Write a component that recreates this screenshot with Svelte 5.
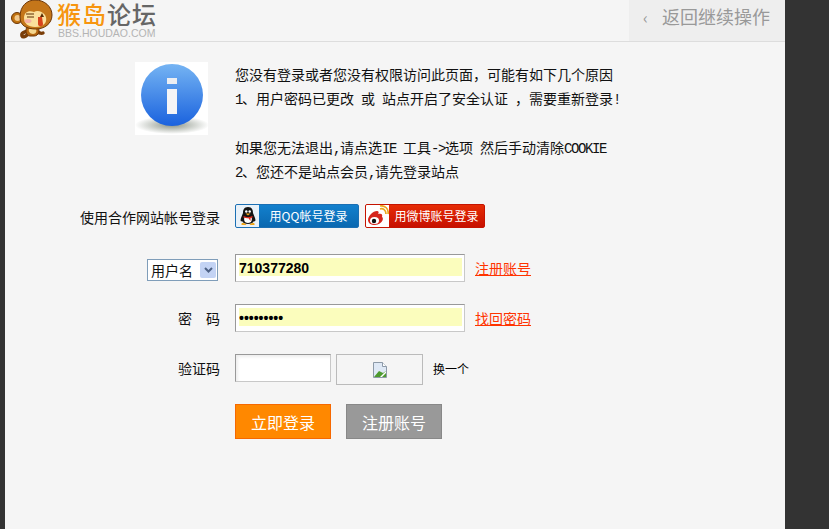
<script>
  // Login form state
  let account = '710377280';
  let password = '*********';
  let captcha = '';

  const notice = [
    '您没有登录或者您没有权限访问此页面，可能有如下几个原因',
    '1、用户密码已更改 或 站点开启了安全认证 ，需要重新登录!',
    '',
    '如果您无法退出,请点选IE 工具->选项 然后手动清除COOKIE',
    '2、您还不是站点会员,请先登录站点'
  ];

  // Latin runs are half a CJK cell wide, so they get their own font
  const chunks = (line) => line.split(/([\x20-\x7e]+)/).filter(Boolean);
  const isLatin = (part) => /^[\x20-\x7e]/.test(part);
</script>

<div class="page">
  <header class="top">
    <div class="brand">
      <svg class="monkey" width="42" height="40" viewBox="0 0 42 40">
        <path d="M17 31c-4 1-7 2-6 5 1 2 4 0 5-1M25 31c3 2 5 3 7 2" fill="none" stroke="#7a3d08" stroke-width="3.4" stroke-linecap="round"/>
        <path d="M16 27h11c2 3 1 9-4 9h-4c-4 0-5-6-3-9z" fill="#b4650f" stroke="#6d3606"/>
        <path d="M18 29h7c1 2 0 5-3 5s-5-3-4-5z" fill="#f6d78f"/>
        <circle cx="6" cy="18" r="5.500" fill="#c0720f" stroke="#6d3606"/>
        <circle cx="6.500" cy="18" r="3" fill="#f3c98b"/>
        <path d="M9 17C9 6 16 0 24 0c10 0 17 7 17 15 0 9-8 14-16 14C16 29 9 26 9 17z" fill="#c4761a" stroke="#6d3606"/>
        <path d="M13 18c0-5 4-8 10-6 3-2 8-1 11 3 3 5 1 12-10 12-7 0-11-4-11-9z" fill="#fbe09c"/>
        <path d="M15 14h8M16 17h7" stroke="#5a2c05" stroke-width="1.200"/>
        <path d="M31 13l-2 4 4 0z" fill="#5a2c05"/>
        <ellipse cx="17" cy="21" rx="3.500" ry="2" fill="#f7b2a5"/>
        <path d="M27 17l4 0 1 7c0 3-5 3-5 0z" fill="#d8431c"/>
      </svg>
      <div class="brand-text">
        <div class="brand-name"><span class="orange">猴岛</span>论坛</div>
        <div class="brand-url">BBS.HOUDAO.COM</div>
      </div>
    </div>
    <a class="back" href="#back"><span class="arrow">‹</span>返回继续操作</a>
  </header>

  <section class="notice">
    <div class="info-box">
      <svg width="73" height="73" viewBox="0 0 73 73">
        <defs>
          <linearGradient id="ball" x1="0" y1="0" x2="0" y2="1">
            <stop offset="0" stop-color="#75b4f3" />
            <stop offset="1" stop-color="#1a62de" />
          </linearGradient>
          <radialGradient id="shade">
            <stop offset="0" stop-color="#8b9488" />
            <stop offset="1" stop-color="#ffffff" />
          </radialGradient>
        </defs>
        <ellipse cx="37" cy="63" rx="37" ry="9" fill="url(#shade)" />
        <circle cx="37" cy="33" r="31" fill="url(#ball)" />
        <rect x="32" y="16" width="10" height="6" fill="#eceef2" />
        <rect x="32" y="27" width="10" height="25" fill="#f4f4f6" />
      </svg>
    </div>
    <div class="notice-text">
      {#each notice as line}
        <p>{#each chunks(line) as part}{#if isLatin(part)}<span class="latin">{part}</span>{:else}{part}{/if}{/each}&nbsp;</p>
      {/each}
    </div>
  </section>

  <form class="login" on:submit|preventDefault>
    <div class="row social">
      <div class="label">使用合作网站帐号登录</div>
      <div class="field">
        <a class="share qq" href="#qq">
          <span class="share-icon">
            <svg width="20" height="21" viewBox="0 0 20 21">
              <path d="M10 1C6 1 5 4 5 7l-2 5c-1 3 0 4 1 3 1 2 3 3 6 3s5-1 6-3c1 1 2 0 1-3l-2-5c0-3-1-6-5-6z" fill="#141414"/>
              <path d="M6.500 11c2 1 5 1 7 0 1 3 0 6-3.500 6s-4.500-3-3.500-6z" fill="#fff"/>
              <circle cx="8.300" cy="5.500" r="1.200" fill="#fff"/>
              <circle cx="11.700" cy="5.500" r="1.200" fill="#fff"/>
              <path d="M7.500 7.500h5L10 9.500z" fill="#f2a516"/>
              <path d="M5.500 10c3 1.500 6 1.500 9 0v1.500l-2 .8v2.700l-2-2.800c-2 0-3.500-.3-5-.8z" fill="#e3281b"/>
              <path d="M3.500 17.500c2-1 4 0 5 1.500h-5zM16.500 17.500c-2-1-4 0-5 1.500h5z" fill="#f2a516"/>
            </svg>
          </span>
          <span class="share-text">用QQ帐号登录</span>
        </a>
        <a class="share weibo" href="#weibo">
          <span class="share-icon">
            <svg width="22" height="22" viewBox="0 0 22 22">
              <path d="M1 15c0-4 5-9 9-9 2 0 2 2 1 3 3-1 5 0 4 3 2 1 1 7-7 8-4 0-7-2-7-5z" fill="#d6251c"/>
              <ellipse cx="7.500" cy="15.500" rx="4.500" ry="3.500" fill="#fff"/>
              <circle cx="7" cy="16" r="2.200" fill="#111"/>
              <path d="M13 4c3-1 6 1 6 5M13 1c5-1 9 3 8 8" fill="none" stroke="#eda81c" stroke-width="1.700"/>
            </svg>
          </span>
          <span class="share-text">用微博账号登录</span>
        </a>
      </div>
    </div>

    <div class="row">
      <div class="label">
        <div class="select">用户名<span class="select-btn">
            <svg width="9" height="6" viewBox="0 0 9 6"><path d="M1 1l3.500 3.500L8 1" fill="none" stroke="#4d6185" stroke-width="2"/></svg>
          </span></div>
      </div>
      <div class="field">
        <div class="input wide"><input class="filled" bind:value={account} /></div>
        <a class="link" href="#register">注册账号</a>
      </div>
    </div>

    <div class="row">
      <div class="label">密　码</div>
      <div class="field">
        <div class="input wide"><input class="filled" type="password" bind:value={password} /></div>
        <a class="link" href="#find">找回密码</a>
      </div>
    </div>

    <div class="row code">
      <div class="label">验证码</div>
      <div class="field">
        <div class="input short"><input bind:value={captcha} /></div>
        <div class="captcha">
          <svg width="16" height="16" viewBox="0 0 16 16">
            <path d="M1.500.5h9l4 4v11h-13z" fill="#dfe9f6" stroke="#8d9aa8"/>
            <path d="M10.500.5v4h4" fill="#fff" stroke="#8d9aa8"/>
            <path d="M2 15l5-6 4 2 3-2v6z" fill="#4d9a2e"/>
            <path d="M8 15l6-6v2l-4 4z" fill="#fff"/>
          </svg>
        </div>
        <a class="swap" href="#swap">换一个</a>
      </div>
    </div>

    <div class="row actions">
      <div class="label"></div>
      <div class="field">
        <button class="btn primary" type="submit">立即登录</button>
        <button class="btn secondary" type="button">注册账号</button>
      </div>
    </div>
  </form>
</div>

<style>
  :global(body) {
    margin: 0;
    background: #333;
  }

  .page {
    width: 780px;
    height: 529px;
    margin-left: 5px;
    background: #f5f5f5;
    overflow: hidden;
    font-family: "Noto Sans CJK SC", "Liberation Sans", sans-serif;
    font-size: 14px;
    color: #111;
  }

  .top {
    height: 41px;
    display: flex;
    justify-content: space-between;
    border-bottom: 1px solid #ddd;
  }

  .brand {
    display: flex;
    padding-left: 6px;
  }

  .monkey {
    margin-right: 4px;
  }

  .brand-name {
    font-size: 24px;
    line-height: 27px;
    font-weight: 500;
    color: #666;
    letter-spacing: 1px;
    white-space: nowrap;
  }

  .orange {
    color: #f7950f;
  }

  .brand-url {
    padding-left: 1px;
    font-family: "Liberation Sans", sans-serif;
    font-size: 10.500px;
    line-height: 13px;
    color: #b4b4b4;
    white-space: nowrap;
  }

  .back {
    width: 156px;
    box-sizing: border-box;
    padding-left: 14px;
    background: #eee;
    color: #999;
    font-size: 18px;
    line-height: 32px;
    text-decoration: none;
    white-space: nowrap;
  }

  .arrow {
    display: inline-block;
    width: 19px;
    font-size: 16px;
  }

  .notice {
    display: flex;
    margin: 20px 0 0 130px;
    gap: 27px;
  }

  .info-box {
    width: 73px;
    height: 73px;
    background: #fff;
  }

  .info-box svg {
    display: block;
  }

  .notice-text {
    font-size: 14px;
    line-height: 24.300px;
    white-space: pre;
  }

  .notice-text p {
    margin: 0;
  }

  .latin {
    font-family: "Liberation Mono", monospace;
    letter-spacing: -1.400px;
    line-height: 0;
  }

  .login {
    margin-top: 21px;
  }

  .row {
    display: flex;
    align-items: center;
    height: 28px;
    margin-bottom: 22px;
  }

  .row.social {
    height: 24px;
    margin-bottom: 26px;
  }

  .row.social .label {
    margin-top: 1px;
  }

  .row.actions {
    height: 35px;
  }

  .label {
    width: 215px;
    flex: none;
    display: flex;
    justify-content: flex-end;
    white-space: nowrap;
    margin-top: -1px;
  }

  .field {
    display: flex;
    align-items: center;
    margin-left: 15px;
  }

  .share {
    display: flex;
    height: 24px;
    box-sizing: border-box;
    margin-right: 6px;
    border-radius: 2px;
    overflow: hidden;
    color: #fff;
    font-size: 12px;
    line-height: 22px;
    text-decoration: none;
    border: 1px solid;
  }

  .share-icon {
    width: 23px;
    display: flex;
    align-items: center;
    justify-content: center;
    background: #fff;
    flex: none;
  }

  .share-text {
    text-align: center;
    white-space: nowrap;
  }

  .qq {
    width: 124px;
    border-color: #1b6fb3;
    background: linear-gradient(#1380cd, #0a68b0);
  }

  .qq .share-icon {
    background: #e9f1f8;
  }

  .qq .share-text {
    width: 99px;
  }

  .weibo {
    width: 120px;
    border-color: #c51300;
    background: linear-gradient(#e62c05, #c71000);
  }

  .weibo .share-text {
    width: 95px;
  }

  .select {
    width: 71px;
    height: 22px;
    box-sizing: border-box;
    display: flex;
    align-items: center;
    justify-content: space-between;
    margin: 5px 2px 0 0;
    padding: 0 1px 0 3px;
    border: 1px solid #7f9db9;
    background: #fff;
    line-height: 20px;
  }

  .select-btn {
    width: 16px;
    height: 16px;
    display: flex;
    align-items: center;
    justify-content: center;
    background: #c3d3f4;
    border-radius: 2px;
  }

  .input {
    height: 28px;
    box-sizing: border-box;
    padding: 3px 2px 5px 3px;
    background: #fff;
    border: 1px solid;
    border-color: #999 #c8c8c8 #c8c8c8 #999;
  }

  .input.wide {
    width: 230px;
  }

  .input.short {
    width: 96px;
    margin-right: 5px;
    box-shadow: inset 2px 2px 3px #eee;
  }

  .input input {
    display: block;
    width: 100%;
    height: 100%;
    box-sizing: border-box;
    padding: 1px 0 0;
    border: 0;
    outline: 0;
    background: transparent;
    font-family: "Liberation Sans", sans-serif;
    font-size: 14px;
    font-weight: 700;
    color: #000;
  }

  .input input.filled {
    background: #fbfdbd;
  }

  .link {
    margin-left: 10px;
    color: #ff3300;
    white-space: nowrap;
  }

  .captcha {
    width: 87px;
    height: 31px;
    margin-top: 3px;
    box-sizing: border-box;
    display: flex;
    align-items: center;
    justify-content: center;
    border: 1px solid #bbb;
  }

  .swap {
    margin-left: 10px;
    font-size: 12px;
    color: #000;
    text-decoration: none;
  }

  .btn {
    width: 96px;
    height: 35px;
    padding: 0;
    font-family: inherit;
    font-size: 16px;
    color: #fff;
    border: 1px solid;
  }

  .primary {
    background: #ff8800;
    border-color: #f66800;
  }

  .secondary {
    margin-left: 15px;
    background: #999;
    border-color: #888;
  }
</style>
